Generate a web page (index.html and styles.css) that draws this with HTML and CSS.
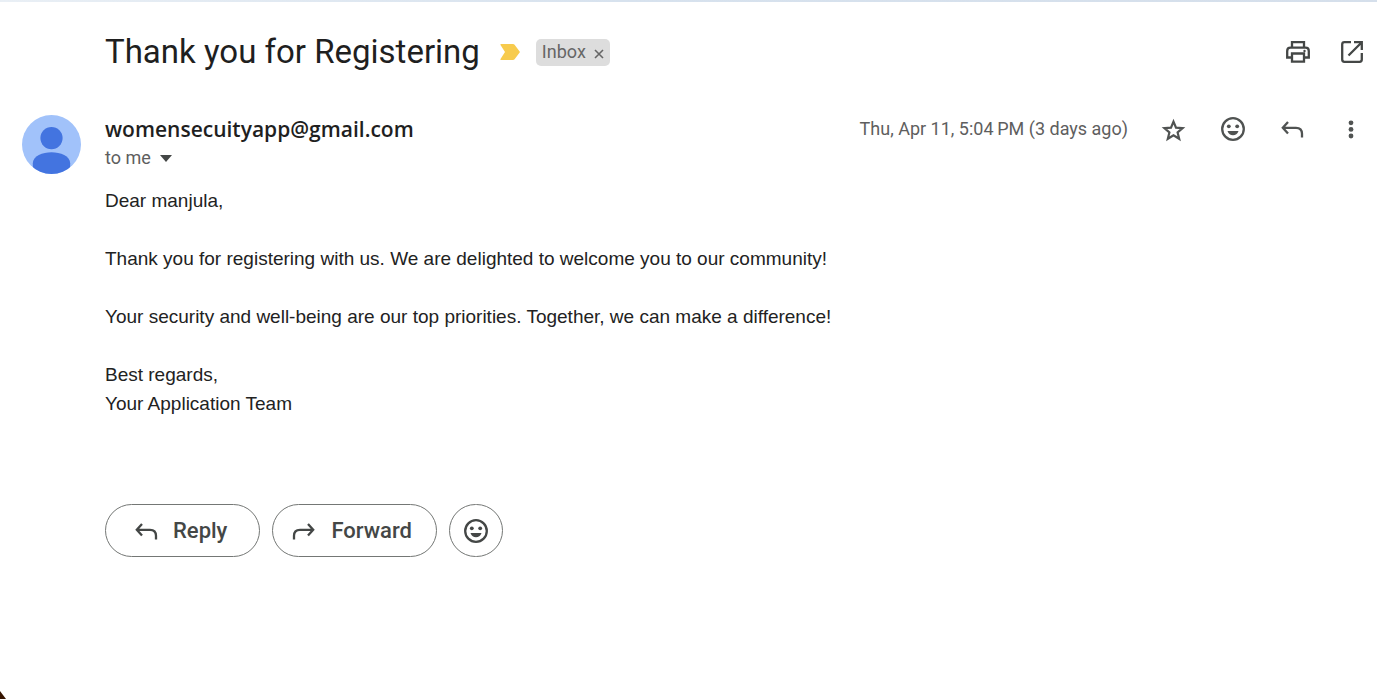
FILE: index.html
```html
<!DOCTYPE html>
<html lang="en">
<head>
<meta charset="utf-8">
<meta name="viewport" content="width=device-width, initial-scale=1">
<title>Thank you for Registering</title>
<link rel="stylesheet" href="styles.css">
</head>
<body>
<svg class="sprite" aria-hidden="true">
  <symbol id="reply" viewBox="0 0 26 26"><path d="M9 6 3.800 11.800 9 17.600M3.800 11.800H17q6 0 6 6v3.700" fill="none" stroke="currentColor" stroke-width="2.300"/></symbol>
  <symbol id="smile" viewBox="0 0 26 26"><circle cx="13" cy="13" r="10.800" fill="none" stroke="currentColor" stroke-width="2.300"/><circle cx="8.800" cy="10.300" r="1.900"/><circle cx="17.200" cy="10.300" r="1.900"/><path d="M7.500 15h11c-1 2.900-3 4.300-5.500 4.300S8.500 17.900 7.500 15z"/></symbol>
</svg>
<div class="strip"></div>
<main class="message">
  <header class="subject">
    <h1 class="subject-title">Thank you for Registering</h1>
    <svg class="marker" viewBox="0 0 20 16" aria-hidden="true"><path d="M1 0h12q1 0 1.600.8L20 8l-5.400 7.200q-.6.800-1.600.8H1q-1 0-.5-1L5 8 .5 1Q0 0 1 0z"/></svg>
    <span class="label">Inbox
      <button class="label-remove" aria-label="Remove label Inbox"><svg viewBox="0 0 10 10"><path d="m1 1 8 8M9 1 1 9" fill="none" stroke="currentColor" stroke-width="1.600"/></svg></button>
    </span>
    <div class="subject-tools">
      <button class="tool" aria-label="Print"><svg viewBox="0 0 26 26"><path d="M7 8.500V3.200h12v5.300M7 18.500H2.200V12q0-3.300 3.300-3.300h15q3.300 0 3.300 3.300v6.500H19M7 14.500h12v8.200H7z" fill="none" stroke="currentColor" stroke-width="2.300"/><circle cx="19.500" cy="12" r="1.200"/></svg></button>
      <button class="tool" aria-label="Open in new window"><svg viewBox="0 0 26 26"><path d="M12 3.200H5.400q-2.200 0-2.200 2.200v15.200q0 2.200 2.200 2.200h15.200q2.200 0 2.200-2.200V14M15 3.200h7.800V11M22.800 3.200 9.500 16.500" fill="none" stroke="currentColor" stroke-width="2.300"/></svg></button>
    </div>
  </header>
  <article class="mail">
    <svg class="avatar" viewBox="0 0 60 60" role="img" aria-label="Sender picture"><defs><clipPath id="disc"><circle cx="30" cy="30" r="30"/></clipPath></defs><g clip-path="url(#disc)"><path class="avatar-back" d="M0 0h60v60H0z"/><circle class="avatar-person" cx="30" cy="23.500" r="11.300"/><path class="avatar-person" d="M11 60V49c0-7 10-11 19-11s19 4 19 11v11z"/></g></svg>
    <div class="content">
      <div class="sender-row">
        <strong class="sender">womensecuityapp@gmail.com</strong>
        <time class="date">Thu, Apr 11, 5:04&#8201;PM (3 days ago)</time>
        <div class="mail-tools">
          <button class="tool" aria-label="Star"><svg viewBox="0 0 26 26"><path d="m12.500 5.600 2.500 6 6.600.5-5 4.300 1.600 6.400-5.700-3.500-5.700 3.500 1.600-6.400-5-4.300 6.600-.5z" fill="none" stroke="currentColor" stroke-width="2.200"/></svg></button>
          <button class="tool" aria-label="Add reaction"><svg><use href="#smile"/></svg></button>
          <button class="tool" aria-label="Reply"><svg><use href="#reply"/></svg></button>
          <button class="tool" aria-label="More"><svg viewBox="0 0 26 26"><circle cx="13" cy="6.800" r="2.400"/><circle cx="13" cy="13.400" r="2.400"/><circle cx="13" cy="20" r="2.400"/></svg></button>
        </div>
      </div>
      <button class="recipient">to me <svg class="caret" viewBox="0 0 12 7" aria-hidden="true"><path d="M0 0h12L6 7z"/></svg></button>
      <div class="body">
        <p>Dear manjula,</p>
        <p>Thank you for registering with us. We are delighted to welcome you to our community!</p>
        <p>Your security and well-being are our top priorities. Together, we can make a difference!</p>
        <p>Best regards,<br>Your Application Team</p>
      </div>
      <footer class="actions">
        <button class="action"><svg><use href="#reply"/></svg>Reply</button>
        <button class="action action-forward"><svg class="flip"><use href="#reply"/></svg>Forward</button>
        <button class="action action-round" aria-label="Add reaction"><svg><use href="#smile"/></svg></button>
      </footer>
    </div>
  </article>
</main>
<div class="corner"></div>
</body>
</html>
```

FILE: styles.css
```css
* { box-sizing: border-box; }
body { margin: 0; background: #fff; color: #1f1f1f; font-family: "Open Sans", sans-serif; }
button { margin: 0; padding: 0; border: 0; background: none; color: inherit; font: inherit; cursor: pointer; }
svg { display: block; fill: currentColor; }
.sprite { position: absolute; width: 0; height: 0; }
.strip { height: 2px; background: linear-gradient(90deg, #e9eff5, #d7e2ee 45%, #d5dfeb); }
.message { padding: 26px 10px 0 22px; }
.subject { display: flex; align-items: center; min-height: 48px; padding-left: 83px; }
.subject-title { margin: 0; font: 400 33px/48px Roboto, sans-serif; }
.marker { width: 20px; height: 16px; margin: 0 16px 0 20px; color: #f7cb4d; }
.label { display: flex; align-items: center; gap: 8px; height: 27px; padding: 0 6px; border-radius: 5px; background: #ddd; color: #666; font: 18px/26px Roboto, sans-serif; }
.label-remove svg { width: 10px; height: 10px; margin-top: 3px; }
.subject-tools, .mail-tools { display: flex; color: #444746; }
.subject-tools { gap: 24px; margin-left: auto; }
.mail-tools { gap: 29px; margin-left: 31px; padding-right: 1px; color: #505352; }
.tool { display: grid; place-items: center; width: 30px; height: 30px; }
.tool svg { width: 26px; height: 26px; }
.mail { display: flex; align-items: flex-start; gap: 24px; margin-top: 38px; }
.avatar { flex: none; width: 59px; height: 59px; margin-top: 1px; }
.avatar-back { fill: #a1c2fa; }
.avatar-person { fill: #4374e0; }
.content { flex: 1; }
.sender-row { display: flex; align-items: center; height: 30px; }
.sender { font: 600 21px/30px "Open Sans", sans-serif; }
.date { margin-left: auto; color: #5e5e5e; font: 18px/28px Roboto, sans-serif; }
.recipient { display: flex; align-items: center; gap: 9px; color: #5e5e5e; font: 18px/28px Roboto, sans-serif; }
.caret { width: 12px; height: 7px; color: #444746; }
.body { margin-top: 14px; color: #222; font: 19px/29px "Liberation Sans", Arial, sans-serif; }
.body p { margin: 0 0 29px; }
.actions { display: flex; gap: 12px; margin-top: 86px; color: #444746; }
.action { display: flex; align-items: center; gap: 14px; height: 53px; padding: 0 32px 0 27px; border: 1px solid #747775; border-radius: 27px; font: 500 22px/30px Roboto, sans-serif; }
.action svg { width: 26px; height: 26px; }
.action-forward { padding: 0 24px 0 18px; }
.action-round { justify-content: center; width: 54px; padding: 0; }
.flip { transform: scaleX(-1); }
.corner { position: fixed; left: 0; bottom: 0; width: 6px; height: 8px; background: #351400; clip-path: polygon(0 0, 100% 100%, 0 100%); }
```
